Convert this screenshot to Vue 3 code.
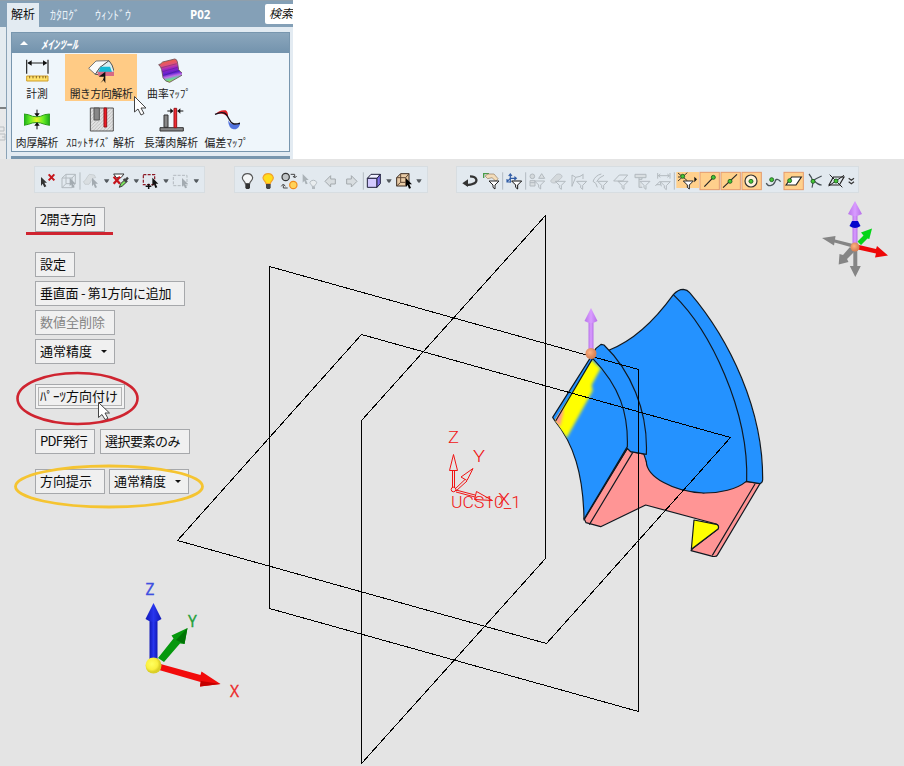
<script setup>
const funnel = (x, y, c, fill = 'none') =>
  `<path d="M${x} ${y}h30l-12 12v12l-6 -5v-7z" fill="${fill}" stroke="${c}" stroke-width="3"/>`
const pointer = (x, y, c) =>
  `<path d="M${x} ${y}l18 18h-8l5 11l-6 2l-4 -11l-5 6z" fill="${c}"/>`
const caret = (x) => `<path d="M${x - 8} 58h16l-4 7l-4 4l-4 -4z" fill="#555b60"/>`
const line = (x, c = '#aab2b8') => `<path d="M${x} 37V89" stroke="${c}" stroke-width="2.5"/>`
const hot = (x) => `<rect x="${x}" y="37" width="58" height="52" fill="#ffd08c" stroke="#e59b6c" stroke-width="3"/>`
const dot = (x, y, r = 6) => `<circle cx="${x}" cy="${y}" r="${r}" fill="#45c535" stroke="#17581a" stroke-width="2.5"/>`
const G = '#b3babf'
const K = '#222'

const bars = [
  {
    name: 'select',
    icons: [
      { x: 15, w: 70, s: '<path d="M33 51l18 17h-8l6 11l-6 3l-5 -11l-5 7z" fill="#333"/><path d="M56 43l17 18M73 43l-17 18" stroke="#c5161d" stroke-width="6"/>' },
      { x: 85, w: 60, s: `<path d="M97 54l12 -11h28v28l-10 12h-30zM97 54h30v29M127 54l10 -11M109 43v28h28M97 83l12 -12" fill="none" stroke="${G}" stroke-width="3"/>` + pointer(120, 53, '#a3abb1') },
      { x: 145, w: 67, s: line(151) + `<path d="M161 65c8 -2 8 -12 18 -22l15 2l4 8c-12 0 -12 10 -20 20h-12z" fill="#d9dee1" stroke="#bfc5c9" stroke-width="2"/>` + pointer(187, 53, '#a3abb1') },
      { x: 212, w: 31, s: caret(229) },
      { x: 243, w: 59, s: `<path d="M251 42h31l-9 11h-14z" fill="#fff" stroke="#333" stroke-width="3"/><path d="M251 50l19 21M270 50l-19 21" stroke="#c5161d" stroke-width="7"/><path d="M268 82l4 -11l14 -13l6 6l-15 14z" fill="#7be35b" stroke="#333" stroke-width="3"/><path d="M281 57l9 9M286 61l8 -8" stroke="#444" stroke-width="7"/>` },
      { x: 302, w: 31, s: caret(318) },
      { x: 333, w: 60, s: `<path d="M340 44h34v30h-34z" fill="none" stroke="#8c1723" stroke-width="3.5" stroke-dasharray="9 4"/><path d="M347 79h17M356 71v16" stroke="#111" stroke-width="4.500"/>` + pointer(367, 53, '#111') },
      { x: 393, w: 31, s: caret(408) },
      { x: 424, w: 61, s: `<path d="M431 46h41v31h-41z" fill="none" stroke="${G}" stroke-width="3" stroke-dasharray="9 4"/>` + pointer(457, 54, '#a3abb1') },
      { x: 485, w: 37, s: caret(498) },
    ],
  },
  {
    name: 'visibility',
    icons: [
      { x: 15, w: 67, s: '<path d="M46 71c0 -7 -9 -9 -9 -18a16 16 0 0 1 31 0c0 9 -9 11 -9 18z" fill="#f5f7f8" stroke="#555" stroke-width="3.5"/><path d="M46 72h14v11l-3 4h-8l-3 -4z" fill="#333"/>' },
      { x: 82, w: 64, s: '<path d="M109 71c0 -7 -9 -9 -9 -18a16 16 0 0 1 31 0c0 9 -9 11 -9 18z" fill="#ffdd1c" stroke="#f3a12a" stroke-width="3.5"/><path d="M109 72h14v11l-3 4h-8l-3 -4z" fill="#444"/>' },
      { x: 146, w: 64, s: '<circle cx="166" cy="51" r="11" fill="#bfc3c5" stroke="#333" stroke-width="3.5"/><circle cx="189" cy="75" r="11" fill="#ffd35a" stroke="#f08c1d" stroke-width="3.5"/><path d="M181 43h12v8M188 48l5 6l6 -6M172 84h-13v-8M153 79l6 -7l6 7" fill="none" stroke="#444" stroke-width="3"/>' },
      { x: 210, w: 64, s: pointer(218, 42, '#aab2b7') + `<path d="M246 79c0 -5 -6 -6 -6 -12a11 11 0 0 1 20 0c0 6 -6 7 -6 12z" fill="#e9edef" stroke="${G}" stroke-width="3"/><path d="M246 80h9v7h-9z" fill="${G}"/>` },
      { x: 274, w: 63, s: '<path d="M286 64l17 -17v10h14v15h-14v9z" fill="#d8dde0" stroke="#a3a9ad" stroke-width="3"/>' },
      { x: 337, w: 57, s: '<path d="M382 64l-17 -17v10h-14v15h14v9z" fill="#d8dde0" stroke="#a3a9ad" stroke-width="3"/>' },
      { x: 394, w: 68, s: line(401) + '<path d="M413 55l11 -12h28l-10 12z" fill="#f0f0ff" stroke="#20203c" stroke-width="3"/><path d="M413 55h29v27h-29z" fill="#d3caff" stroke="#20203c" stroke-width="3"/><path d="M442 55l10 -12v28l-10 11z" fill="#7f70e8" stroke="#20203c" stroke-width="3"/>' },
      { x: 462, w: 30, s: caret(477) },
      { x: 492, w: 60, s: '<path d="M500 53l12 -12h25v25l-9 12h-28z" fill="#e8cba6" stroke="#3b2b20" stroke-width="3"/><path d="M500 53h27v25M527 53l10 -12M512 41v26h25M500 78l12 -11" fill="none" stroke="#604833" stroke-width="3"/>' + pointer(528, 55, '#000') },
      { x: 552, w: 39, s: caret(567) },
    ],
  },
  {
    name: 'filter',
    icons: [
      { x: 21, w: 71, s: '<path d="M60 49c22 0 26 18 8 23c-8 3 -14 3 -19 2" fill="none" stroke="#333" stroke-width="7"/><path d="M37 70l17 -12v23z" fill="#333"/>' },
      { x: 92, w: 60, s: '<path d="M100 54v-13h16" stroke="#4a9c48" stroke-width="4" fill="none"/><path d="M104 48l9 -6h18l12 14l-6 8l-12 -11l-13 3z" fill="#f3dcb9" stroke="#927a5d" stroke-width="2"/>' + funnel(116, 63, K, '#fff') },
      { x: 152, w: 69, s: line(157) + '<path d="M180 68V43M175 48l5 -6l5 6M180 55l-9 9M170 57v9h9M180 55h17M192 50l6 5l-6 5" fill="none" stroke="#315da6" stroke-width="3.500"/>' + funnel(184, 63, '#111', '#fff') },
      { x: 221, w: 69, s: line(226) + `<circle cx="246" cy="49" r="7" fill="#d4d9dc" stroke="${G}" stroke-width="3"/><path d="M265 55l9 -14l9 14zM239 62h15v16h-15zM239 68h15" fill="#d9dee1" stroke="${G}" stroke-width="3"/>` + funnel(253, 63, G) },
      { x: 290, w: 66, s: `<path d="M302 61l17 -18c9 -4 20 3 15 10l-17 15c-8 3 -18 0 -15 -7z" fill="#d4d9dc" stroke="${G}" stroke-width="2"/>` + funnel(315, 64, G) },
      { x: 356, w: 63, s: `<path d="M365 80V45l11 7q14 -1 23 -9M398 43v14M376 52l-11 26" fill="none" stroke="${G}" stroke-width="3"/>` + funnel(379, 64, G) },
      { x: 419, w: 63, s: `<path d="M453 42q-18 4 -25 22q10 3 13 18M461 46q-16 6 -22 19" fill="none" stroke="${G}" stroke-width="3"/>` + funnel(442, 64, G) },
      { x: 482, w: 63, s: `<path d="M490 63l17 -18h25l-15 18z" fill="none" stroke="${G}" stroke-width="3"/>` + funnel(503, 64, G) },
      { x: 545, w: 65, s: `<path d="M554 43h33v10h-33zM566 53v29h10M566 58h9v-5" fill="#d9dee1" stroke="${G}" stroke-width="3"/>` + funnel(569, 64, G) },
      { x: -5, w: 67, s: line(59) + `<path d="M9 39v17M46 39v17M11 47h33M17 42l-6 5l6 5M38 42l6 5l-6 5M2 78l14 -14l4 15M5 74h13" fill="none" stroke="${G}" stroke-width="3"/>` + funnel(17, 65, G) },
      { x: 62, w: 71, s: '<path d="M63 36h68v48h-68z" fill="#ffd08c"/><path d="M68 39l28 23M96 38l-28 25M68 51h8" stroke="#222" stroke-width="2.5"/><path d="M117 50l8 8l-8 9z" fill="#111"/>' + dot(82, 49) + funnel(84, 63, '#222', '#fff') },
      { x: 133, w: 63, s: hot(136) + '<path d="M149 80l27 -28" stroke="#222" stroke-width="3.5"/>' + dot(176, 52) },
      { x: 196, w: 63, s: hot(199) + '<path d="M205 83l42 -40" stroke="#222" stroke-width="3.5"/>' + dot(226, 64) },
      { x: 259, w: 64, s: hot(262) + '<circle cx="289" cy="63" r="18" fill="#fff2dc" stroke="#333" stroke-width="3.5"/>' + dot(289, 64) },
      { x: 323, w: 62, s: '<path d="M333 69c4 12 20 10 26 -4c2 -10 10 -9 17 0" fill="none" stroke="#4b555c" stroke-width="4"/>' + dot(349, 59) },
      { x: 385, w: 64, s: hot(388) + '<path d="M394 75l17 -24h29l-16 24z" fill="#fff" stroke="#222" stroke-width="3.5"/>' + dot(405, 62) },
      { x: 449, w: 63, s: '<path d="M461 42q17 20 9 41M499 48q-30 14 -22 15q12 12 22 12" fill="none" stroke="#444e55" stroke-width="3.5"/>' + dot(473, 64) },
      { x: 512, w: 60, s: '<path d="M521 75l13 -24h32l-14 24z" fill="none" stroke="#222" stroke-width="3.5"/><path d="M523 44l38 38M566 46l-46 32" stroke="#222" stroke-width="3"/>' + dot(542, 63) },
      { x: 572, w: 36, s: '<path d="M580 55l8 6l8 -6M580 65l8 6l8 -6" fill="none" stroke="#333" stroke-width="3.5"/>' },
    ],
  },
]

const tools = [
  [
    { label: '計測', w: 50, ls: 0, x: 75, s: '<path d="M79 180v42M143 180v42M84 190h54" stroke="#222" stroke-width="3.500"/><path d="M81 190l13 -8v16zM141 190l-13 -8v16z" fill="#111"/><path d="M79 229h64v15h-64z" fill="#ffe26c" stroke="#cf9d2b" stroke-width="3"/><path d="M88 229v7M98 229v7M108 229v7M118 229v7M128 229v7M136 229v7" stroke="#705018" stroke-width="2.5"/>' },
    { label: '開き方向解析', w: 72, ls: -0.35, active: true, x: 266, s: '<path d="M264 206l22 -22l39 -1l-27 21l-14 20z" fill="#fafafa" stroke="#777" stroke-width="3"/><path d="M298 203l27 -20l9 13l10 29h-50l-10 -1z" fill="#d9edf1" stroke="#555" stroke-width="3"/><path d="M300 201h28l6 16h-41z" fill="#15bad5"/><path d="M289 216h51l4 13h-50z" fill="#d66a86"/><path d="M299 250q10 -8 11 -19h-16l20 -15v35l-5 -9z" fill="#111"/>' },
    { label: '曲率ﾏｯﾌﾟ', w: 64, ls: 0.2, x: 472, s: '<defs><linearGradient id="cv" x1=".3" y1="0" x2=".55" y2="1"><stop offset="0" stop-color="#f2642e"/><stop offset=".25" stop-color="#e0527a"/><stop offset=".42" stop-color="#9a25c8"/><stop offset=".62" stop-color="#5a1fd0"/><stop offset=".74" stop-color="#c06ae6"/><stop offset=".85" stop-color="#61d7a0"/><stop offset="1" stop-color="#c8db25"/></linearGradient></defs><path d="M476 195q6 -1 12 -8l36 -9q6 0 8 8l4 24q6 10 18 12l-45 26q-14 -2 -20 -14l-4 -24q-2 -9 -9 -15z" fill="url(#cv)" stroke="#6b4f58" stroke-width="2.500"/><path d="M484 204l46 -12M487 216l46 -13M489 228l48 -16" stroke="#37205e" stroke-width="2.500" opacity=".4"/>' },
  ],
  [
    { label: '肉厚解析', w: 50, ls: -0.2, x: 75, s: '<defs><linearGradient id="gr"><stop offset="0" stop-color="#19a918"/><stop offset=".25" stop-color="#68ef25"/><stop offset=".5" stop-color="#e6f428"/><stop offset=".75" stop-color="#68ef25"/><stop offset="1" stop-color="#19a918"/></linearGradient></defs><path d="M70 343l14 2q25 13 49 0l15 -2v34l-15 -3q-25 -11 -49 0l-14 3z" fill="url(#gr)" stroke="#2b9b18" stroke-width="3"/><path d="M110 330v13M110 389v-13" stroke="#111" stroke-width="3"/><path d="M102 341h16l-8 11zM102 378h16l-8 -11z" fill="#111"/>' },
    { label: 'ｽﾛｯﾄｻｲｽﾞ 解析', w: 77, ls: 0.2, x: 266, s: '<defs><pattern id="h" width="10" height="10" patternUnits="userSpaceOnUse"><path d="M0 10l10 -10" stroke="#aaa" stroke-width="2"/></pattern></defs><path d="M269 325h69v69h-69z" fill="#e2e2e2"/><path d="M269 325h69v69h-69z" fill="url(#h)" stroke="#555" stroke-width="3"/><path d="M280 325h16v36h-16z" fill="#888" stroke="#555" stroke-width="3"/><path d="M310 325h8v57h-8z" fill="#ed1b24" stroke="#981219" stroke-width="3"/>' },
    { label: '長薄肉解析', w: 64, ls: 0, x: 476, s: '<path d="M490 346h12v37h-12zM478 384h70v10h-70z" fill="#888" stroke="#333" stroke-width="3"/><path d="M520 326h8v58h-8z" fill="#f02b32" stroke="#9c151b" stroke-width="3"/><path d="M500 334h16M531 334h17" stroke="#111" stroke-width="3"/><path d="M509 326v16l9 -8zM539 326v16l-9 -8z" fill="#111"/>' },
    { label: '偏差ﾏｯﾌﾟ', w: 47, ls: 0.2, x: 646, s: '<path d="M646 344q14 -15 31 -12q8 4 7 21q-14 -17 -38 -9z" fill="#dc2026"/><path d="M684 361q8 19 37 10q-5 18 -20 18q-15 -2 -17 -28z" fill="#5273df"/><path d="M645 344c28 -12 34 -2 42 14s15 18 35 12" fill="none" stroke="#16101c" stroke-width="4"/>' },
  ],
]

const rows = [
  [{ t: '2開き方向', w: 70, ls: -0.8 }],
  [{ t: '設定', w: 40, ls: 0 }],
  [{ t: '垂直面 - 第1方向に追加', w: 150, ls: -0.25 }],
  [{ t: '数値全削除', w: 80, ls: 0, off: true }],
  [{ t: '通常精度', w: 80, ls: 0, drop: true }],
  [{ t: 'ﾊﾟｰﾂ方向付け', w: 90, ls: 0, focus: true }],
  [{ t: 'PDF発行', w: 60, ls: -0.65 }, { t: '選択要素のみ', w: 90, ls: -0.5 }],
  [{ t: '方向提示', w: 70, ls: 0 }, { t: '通常精度', w: 80, ls: 0, drop: true }],
]
</script>

<template>
  <div class="app">
    <header class="ribbon">
      <nav class="tabs">
        <span class="tab on">解析</span>
        <span class="tab second">ｶﾀﾛｸﾞ</span>
        <span class="tab third">ｳｨﾝﾄﾞｳ</span>
        <b class="title">P02</b>
        <span class="search">検索</span>
      </nav>
      <div class="body">
        <div class="strip">
          <div class="strip-top"></div>
          <div class="strip-low">
            <svg width="6" height="20" viewBox="0 0 6 20" fill="none" stroke="#b9bdc0"><path d="M0 3h4v4H0M0 10h5v6H0M2 13h3" /></svg>
          </div>
        </div>
        <div class="side">
          <section class="panel">
            <h2><i class="up"></i>ﾒｲﾝﾂｰﾙ</h2>
            <div class="tools">
              <div v-for="(row, r) in tools" :key="r" class="tool-row">
                <div v-for="t in row" :key="t.label" class="tool" :class="{ active: t.active }" :style="{ width: t.w + 'px' }">
                  <svg width="26" height="27" :viewBox="`${t.x - 4} ${r ? 319 : 172} 78 81`" v-html="t.s"></svg>
                  <span :style="{ letterSpacing: t.ls + 'px' }">{{ t.label }}</span>
                </div>
              </div>
            </div>
          </section>
          <div class="next"></div>
        </div>
      </div>
    </header>

    <div class="bars">
      <div v-for="b in bars" :key="b.name" class="bar" :class="b.name">
        <svg v-for="(c, i) in b.icons" :key="i" :width="c.w / 3" height="25" :viewBox="`${c.x} 21 ${c.w} 75`" :style="{ width: c.w / 3 + 'px' }" v-html="c.s"></svg>
      </div>
    </div>

    <main class="commands">
      <div v-for="(row, i) in rows" :key="i" class="row" :class="'r' + i">
        <button v-for="b in row" :key="b.t" :class="{ focus: b.focus }" :disabled="b.off" :style="{ width: b.w + 'px', letterSpacing: b.ls + 'px' }">
          {{ b.t }}<i v-if="b.drop" class="drop"></i>
        </button>
      </div>
    </main>

    <svg class="scene" width="904" height="766" viewBox="0 0 904 766">
      <defs>
        <linearGradient id="violet"><stop offset="0" stop-color="#b873ea" /><stop offset=".5" stop-color="#d99cff" /><stop offset="1" stop-color="#b66fe8" /></linearGradient>
        <linearGradient id="blue"><stop offset="0" stop-color="#1018b8" /><stop offset=".5" stop-color="#2836ee" /><stop offset="1" stop-color="#1119b5" /></linearGradient>
        <radialGradient id="ball" cx=".4" cy=".4"><stop offset="0" stop-color="#ffb381" /><stop offset="1" stop-color="#d98458" /></radialGradient>
        <radialGradient id="sun" cx=".4" cy=".4"><stop offset="0" stop-color="#ffff60" /><stop offset=".7" stop-color="#fbf040" /><stop offset="1" stop-color="#dbcf27" /></radialGradient>
        <filter id="soft"><feGaussianBlur stdDeviation="4" /></filter>
        <clipPath id="face"><path d="M158 237C240 320 265 400 262 500L132 714C130 580 100 490 44 421z" /></clipPath>
      </defs>

      <!-- analysed part -->
      <g transform="translate(540 280) scale(.33333)" stroke="#101820" stroke-width="3.500" stroke-linejoin="round">
        <path d="M262 505L272 515L319 523V545L490 639L619 604L660 611L533 824Q530 831 518 829L453 812L458 806L534 747Q539 737 529 732L317 675L182 740L138 728L132 715z" fill="#ff9595" />
        <path d="M462 720L529 733Q539 738 534 747L454 808z" fill="#ff0" />
        <path d="M208 210C280 182 340 127 400 44Q414 28 430 28Q442 29 449 38C570 180 670 390 668 600Q667 609 660 611L619 604C590 628 540 640 490 639C400 636 320 590 319 545z" fill="#2492ff" />
        <path d="M400 44C510 150 627 390 620 604" fill="none" />
        <path d="M150 235L168 205L183 193L192 195C270 270 325 390 319 523L272 515L262 505L132 720C130 580 100 490 45 423L38 412z" fill="#2492ff" />
        <g clip-path="url(#face)" stroke="none">
          <path d="M140 225L182 265L155 315L158 332L80 474L30 420z" fill="#ff0" filter="url(#soft)" />
          <path d="M40 390L68 380L70 395L60 440L45 425z" fill="#ff9595" filter="url(#soft)" />
        </g>
        <path d="M158 235L47 423M158 235C240 320 265 400 262 500L134 714M278 518L148 734M645 612L517 826" fill="none" />
      </g>

      <!-- datum planes -->
      <g fill="none" stroke="#000" shape-rendering="crispEdges">
        <path d="M269.500 266.500L638.500 369.500V711.500L269.500 608.500z" />
        <path d="M545.500 215.500V558.500L361.500 763.500V420.500z" />
        <path d="M361.500 334.500L730.500 437.500L546.500 643.500L177.500 540.500z" />
      </g>

      <g>
        <path d="M588.500 320h5v30h-5z" fill="url(#violet)" />
        <path d="M591 308l6.500 13q-6.500 4 -13 0z" fill="url(#violet)" />
        <circle cx="591" cy="353.500" r="5.500" fill="url(#ball)" />
      </g>

      <!-- user coordinate system -->
      <g fill="none" stroke="#f01414">
        <path d="M452.500 488V470M454.500 488V470M449.500 470.500h8l-4 -16zM455 489l10 -9.500M456 491l11 -10M461 477l12 -8.500l-6 12zM456 490l19 5M456 492l19 5M474.500 499.500l2 -8l16 9z" />
        <circle cx="453.500" cy="489.500" r="2.300" />
      </g>
      <g class="ucs">
        <text x="448" y="443" textLength="11" lengthAdjust="spacingAndGlyphs">Z</text>
        <text x="473" y="462" textLength="12" lengthAdjust="spacingAndGlyphs">Y</text>
        <text x="498" y="505" textLength="12" lengthAdjust="spacingAndGlyphs">X</text>
        <text x="451" y="508" textLength="70" lengthAdjust="spacingAndGlyphs">UCS10_1</text>
      </g>

      <!-- world axes -->
      <path d="M158 658L173.500 638.500L171.500 635.500L187.500 628L184.500 644L180 643.500L164 662z" fill="#06980d" />
      <path d="M187.500 628L184.500 644L176 640z" fill="#007505" />
      <path d="M160.500 664L200.500 675L201.500 671.500L220.500 684L200 686.500L200.500 682L159 670z" fill="#f20b0b" />
      <path d="M220.500 684L200 686.500L201 681z" fill="#c40000" />
      <path d="M149.500 618h8v44h-8z" fill="url(#blue)" />
      <path d="M153.500 603l8 16q-8 6 -16 0z" fill="url(#blue)" />
      <circle cx="153.500" cy="665.500" r="8" fill="url(#sun)" />
      <g class="axes">
        <text x="145.500" y="595" fill="#3f4fe0" stroke="#3f4fe0">Z</text>
        <text x="188" y="627" fill="#24a13c" stroke="#24a13c">Y</text>
        <text x="230" y="697" fill="#ec2b2b" stroke="#ec2b2b">X</text>
      </g>

      <!-- orientation triad -->
      <g fill="#858585">
        <path d="M853.300 248h4v18h3.500l-5.500 11l-5.500 -11h3.500z" />
        <path d="M853 244l-18 -4.500l.5 -3.500l-13.500 2l12 7.500l.5 -3l18 5z" />
        <path d="M850 247L843 255L839.500 254L838.700 264.500L848.500 262L847 259L855 251z" />
      </g>
      <path d="M857.500 241.500L863.500 235.500L861 232.500L872 228.500L869.300 239L867.500 238.500L861 245z" fill="#05d517" />
      <path d="M859 245l17 4l1 -3l11 9.500l-13 2l1 -4l-18 -4z" fill="#ee0808" />
      <path d="M852.500 213h5v31h-5z" fill="url(#violet)" />
      <path d="M855 201l7 13q-7 4 -14 0z" fill="url(#violet)" />
      <path d="M852 221h6l2.500 5q-5.500 4 -11 0z" fill="#0505cc" />
      <circle cx="855" cy="247" r="4.500" fill="url(#ball)" />

      <!-- annotations -->
      <path d="M26 233.500H113" stroke="#cf2430" stroke-width="3" />
      <ellipse cx="77.500" cy="398.500" rx="60" ry="25.500" fill="none" stroke="#cf2430" stroke-width="2.600" />
      <ellipse cx="109" cy="486.500" rx="93.500" ry="20.500" fill="none" stroke="#f5c431" stroke-width="2.800" />
      <path d="M134.500 96.500v15.500l3.500 -3l3 6l3 -1.500l-3 -5.500h5z" fill="#fff" stroke="#444" />
      <path d="M98.500 402.500v15l3.500 -3l3 5l3 -1l-3 -5.500h4.500z" fill="#fff" stroke="#444" />
    </svg>
  </div>
</template>

<style>
body { margin: 0; }
</style>

<style scoped>
.app { position: relative; width: 904px; height: 766px; overflow: hidden; background: #e4e4e4; font-family: "Noto Sans CJK JP", sans-serif; color: #151515; }
.app * { box-sizing: border-box; }
.ribbon { height: 159px; background: linear-gradient(90deg, #e3ebf2 293px, #fff 293px); }
.tabs { display: flex; width: 293px; height: 27px; padding: 3px 0 0 7px; background: #84a0b7; border-top: 1px solid #8f9fac; line-height: 22px; font-size: 12px; color: #fff; white-space: nowrap; }
.tab.on { width: 32px; padding-left: 4px; margin-top: -1px; background: #e3ebf2; color: #111; }
.second { width: 45px; padding-left: 11px; color: #e9f1f7; }
.third { width: 106px; padding-left: 11px; color: #e9f1f7; }
.title { width: 75px; font: bold 11.500px/22px "Open Sans", sans-serif; }
.search { width: 28px; height: 20px; padding-left: 4px; overflow: hidden; background: #fff; color: #111; border-radius: 2px 0 0 2px; font-style: italic; line-height: 17px; }
.body { display: flex; width: 293px; height: 132px; }
.strip { width: 7px; border-right: 1px solid #8ba3b7; }
.strip-top { height: 82px; background: #e4ebf0; border-bottom: 2px solid #7c8082; }
.strip-low { height: 50px; padding-top: 15px; background: #e8e9ea; }
.strip-low svg { display: block; }
.side { display: flex; flex-direction: column; gap: 4px; padding: 5px 3px 0 4px; width: 286px; }
.panel { height: 120px; border: 1px solid #7896ae; background: #eff6fb; }
.panel h2 { display: flex; align-items: center; gap: 13px; height: 20px; margin: 0; padding-left: 8px; background: linear-gradient(#8ca7bd, #7393ad); color: #fff; font-size: 12px; font-style: italic; letter-spacing: .15px; }
.up { border: 4px solid transparent; border-top: 0; border-bottom-color: #fff; }
.tools { display: flex; flex-direction: column; gap: 2px; padding-top: 1px; }
.tool-row { display: flex; height: 47px; }
.tool { display: flex; flex-direction: column; align-items: center; height: 47px; padding-top: 3px; font-size: 10.800px; line-height: 18px; color: #222; white-space: nowrap; }
.tool svg { flex: none; }
.tool.active { background: #ffcb85; margin-left: 3px; }
.next { height: 3px; background: #7896ae; }
.bars { display: flex; height: 33px; padding: 8px 0 0 35px; }
.bar { display: flex; height: 25px; background: #e2e9ef; box-shadow: 0 0 0 1px #d7dde1; }
.bar svg { flex: none; display: block; }
.visibility { margin-left: 31px; }
.filter { margin-left: 30px; }
.commands { padding: 15px 0 0 35px; }
.row { display: flex; gap: 5px; height: 25px; margin-bottom: 4px; }
.r0, .r4, .r5 { margin-bottom: 20px; }
.r6 { margin-bottom: 15px; }
.r7 { gap: 4px; }
button { display: flex; align-items: center; height: 25px; padding: 0 0 1px 4px; border: 1px solid #a6a8ab; background: #f0f0f0; color: #0c0c0c; font: 13px/22px "Noto Sans CJK JP", sans-serif; white-space: nowrap; }
button:disabled { color: #858585; }
button.focus { box-shadow: inset 0 0 0 2px #f3f3f3, inset 0 0 0 3px #b4b4b4; }
.drop { margin-left: 9px; border: 3px solid transparent; border-bottom: 0; border-top-color: #111; }
.scene { position: absolute; left: 0; top: 0; pointer-events: none; }
.ucs { fill: #f01414; font: 300 16px Roboto, sans-serif; }
.axes { font: 15.500px "Noto Sans", sans-serif; stroke-width: .3px; }
</style>
